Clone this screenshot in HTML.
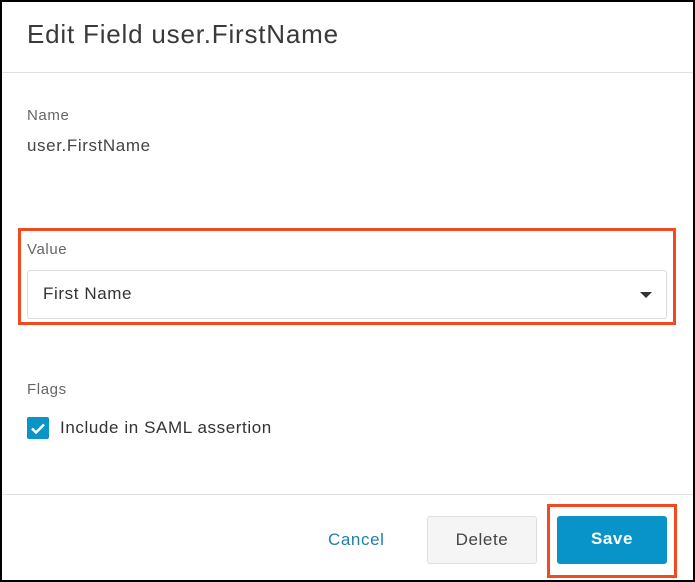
<!DOCTYPE html>
<html><head><style>
*{box-sizing:border-box;margin:0;padding:0}
body{width:695px;height:582px;background:#000;font-family:"Liberation Sans",sans-serif;position:relative;overflow:hidden;letter-spacing:0.6px}
.p{position:absolute;left:2px;top:2px;width:691px;height:578px;background:#fff}
.a{position:absolute}
</style></head><body>
<div class="p"></div>
<div class="a" style="left:27px;top:19px;font-size:26px;color:#3a3a3a;letter-spacing:0.8px">Edit Field user.FirstName</div>
<div class="a" style="left:2px;top:72px;width:691px;height:1px;background:#e0e0e0"></div>
<div class="a" style="left:27px;top:107px;font-size:15px;color:#666">Name</div>
<div class="a" style="left:27px;top:136px;font-size:17px;color:#444">user.FirstName</div>
<div class="a" style="left:18px;top:228px;width:658px;height:97px;border:3px solid #f04a23"></div>
<div class="a" style="left:27px;top:241px;font-size:15px;color:#666">Value</div>
<div class="a" style="left:27px;top:270px;width:640px;height:49px;border:1px solid #ddd;border-radius:3px"></div>
<div class="a" style="left:43px;top:284px;font-size:17px;color:#333">First Name</div>
<div class="a" style="left:640px;top:292px;width:0;height:0;border-left:6px solid transparent;border-right:6px solid transparent;border-top:6px solid #333"></div>
<div class="a" style="left:27px;top:381px;font-size:15px;color:#666">Flags</div>
<div class="a" style="left:27px;top:417px;width:22px;height:22px;background:#0a94c8;border-radius:2px"><svg width="22" height="22"><path d="M5 11.5l4 4 8-8" stroke="#fff" stroke-width="2.5" fill="none"/></svg></div>
<div class="a" style="left:60px;top:418px;font-size:17px;color:#333">Include in SAML assertion</div>
<div class="a" style="left:2px;top:494px;width:691px;height:1px;background:#e0e0e0"></div>
<div class="a" style="left:328px;top:530px;font-size:17px;color:#1f7fa9">Cancel</div>
<div class="a" style="left:427px;top:516px;width:110px;height:48px;border:1px solid #ddd;border-radius:3px;background:#f5f5f5;font-size:17px;color:#444;text-align:center;line-height:46px">Delete</div>
<div class="a" style="left:547px;top:504px;width:130px;height:74px;border:3px solid #f04a23"></div>
<div class="a" style="left:557px;top:516px;width:110px;height:48px;border-radius:3px;background:#0894c8;font-size:17px;font-weight:bold;color:#fff;text-align:center;line-height:46px">Save</div>
</body></html>
